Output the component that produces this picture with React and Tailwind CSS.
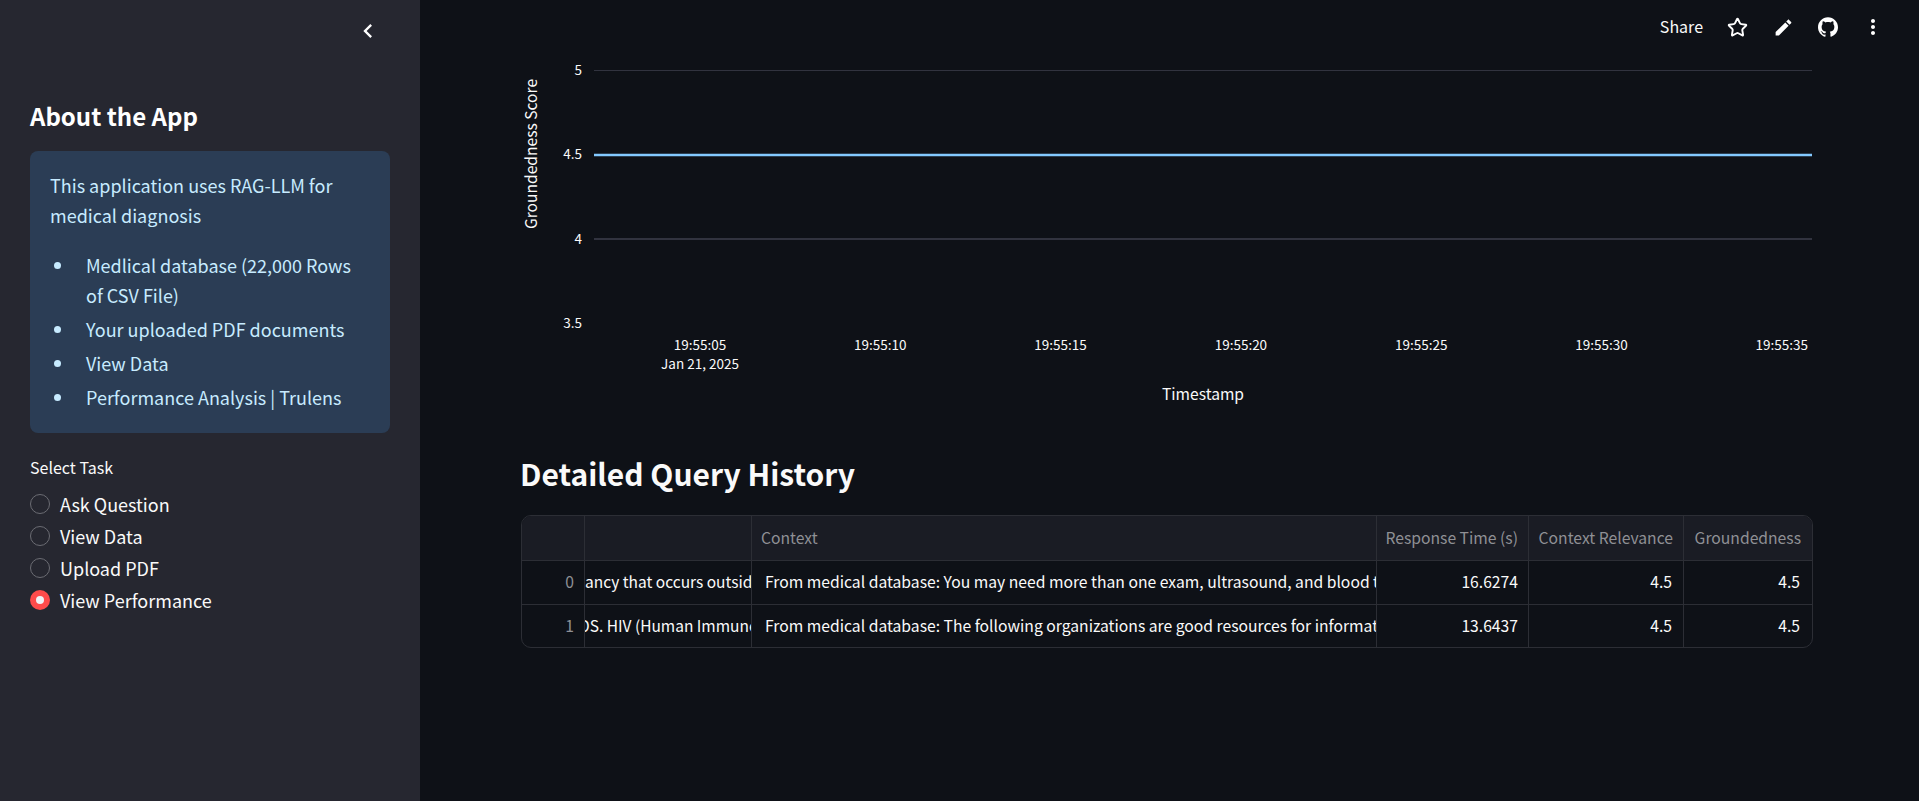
import React from 'react';
import { SiGithub } from 'react-icons/si';
import { Star } from 'lucide-react';

const font = "font-['Noto_Sans_CJK_SC','Noto_Sans',sans-serif]";

const tasks = ['Ask Question', 'View Data', 'Upload PDF', 'View Performance'];
const times = ['19:55:05', '19:55:10', '19:55:15', '19:55:20', '19:55:25', '19:55:30', '19:55:35'];
const bullets = ['Medlical database (22,000 Rows of CSV File)', 'Your uploaded PDF documents', 'View Data', 'Performance Analysis | Trulens'];

const Sidebar = () => (
  <aside className="w-[420px] shrink-0 h-[801px] bg-[#262730] px-[30px] pt-[17px]">
    {/* Collapse button */}
    <div className="flex justify-end pr-[8px] h-[28px]">
      <svg viewBox="0 0 24 24" className="w-[28px] h-[28px] fill-white">
        <path d="M15.41 7.41L14 6l-6 6 6 6 1.41-1.41L10.83 12z" />
      </svg>
    </div>

    <h2 className="mt-[55px] text-[24px] leading-[32px] font-semibold text-white">About the App</h2>

    {/* Info box */}
    <div className="mt-[19px] h-[282px] rounded-[8px] bg-[#2b3d55] pl-[20px] pr-[30px] pt-[19px] text-[#c7ebff] text-[18px] leading-[30px]">
      <p>This application uses RAG-LLM for medical diagnosis</p>
      <ul className="mt-[20px] flex flex-col gap-[4px]">
        {bullets.map((b) => (
          <li key={b} className="flex">
            <span className="mt-[12px] ml-[4px] mr-[25px] w-[7px] h-[7px] shrink-0 rounded-full bg-[#c7ebff]" />
            <span>{b}</span>
          </li>
        ))}
      </ul>
    </div>

    {/* Task radio */}
    <p className="mt-[22px] text-[16px] leading-[24px] text-[#fafafa]">Select Task</p>
    <div className="mt-[15px] flex flex-col gap-[12px]">
      {tasks.map((task, i) => (
        <label key={task} className="flex items-center gap-[10px] h-[20px] text-[18px] leading-[20px] text-[#fafafa]">
          {i === 3 ? (
            <span className="w-[20px] h-[20px] rounded-full bg-[#ff4b4b] flex items-center justify-center">
              <span className="w-[8px] h-[8px] rounded-full bg-[#f0f2f6]" />
            </span>
          ) : (
            <span className="w-[20px] h-[20px] rounded-full border border-[#6b6c73]" />
          )}
          {task}
        </label>
      ))}
    </div>
  </aside>
);

const TopBar = () => (
  <div className="absolute top-[14px] right-[34px] flex items-center text-white">
    <span className="text-[16px] leading-[24px] text-[#fafafa] mr-[24px] mb-[2px]">Share</span>
    <Star size={21} strokeWidth={2.2} className="mr-[25px]" />
    <svg viewBox="0 0 24 24" className="w-[21px] h-[21px] fill-white mr-[24px]">
      <path d="M3 17.25V21h3.75L17.81 9.94l-3.75-3.75L3 17.25zM20.71 7.04c.39-.39.39-1.02 0-1.41l-2.34-2.34c-.39-.39-1.02-.39-1.41 0l-1.83 1.83 3.75 3.75 1.83-1.83z" />
    </svg>
    <SiGithub className="w-[20px] h-[20px] mr-[23px]" />
    <svg viewBox="0 0 24 24" className="w-[24px] h-[24px] fill-white">
      <path d="M12 8c1.1 0 2-.9 2-2s-.9-2-2-2-2 .9-2 2 .9 2 2 2zm0 2c-1.1 0-2 .9-2 2s.9 2 2 2 2-.9 2-2-.9-2-2-2zm0 6c-1.1 0-2 .9-2 2s.9 2 2 2 2-.9 2-2-.9-2-2-2z" />
    </svg>
  </div>
);

// Chart coordinates are relative to (521, 50) on the page
const Chart = () => (
  <svg width="1292" height="360" className="block fill-[#fafafa] text-[13.5px]">
    <line x1="73" x2="1291" y1="20.5" y2="20.5" stroke="#31333f" />
    <line x1="73" x2="1291" y1="189" y2="189" stroke="#31333f" strokeWidth="2" />
    <line x1="73" x2="1291" y1="105" y2="105" stroke="#83c9ff" strokeWidth="2.5" />
    {[['5', 25], ['4.5', 109], ['4', 194], ['3.5', 278]].map(([label, y]) => (
      <text key={label} x="61" y={y} textAnchor="end">{label}</text>
    ))}
    <text transform="translate(16 104) rotate(-90)" textAnchor="middle" className="text-[15.6px]">Groundedness Score</text>
    {times.map((t, i) => (
      <text key={t} x={179 + i * 180.3} y="300" textAnchor="middle">{t}</text>
    ))}
    <text x="179" y="319" textAnchor="middle">Jan 21, 2025</text>
    <text x="682" y="350" textAnchor="middle" className="text-[15.6px]">Timestamp</text>
  </svg>
);

const headers = ['', '', 'Context', 'Response Time (s)', 'Context Relevance', 'Groundedness'];
const rows = [
  {
    idx: 0,
    question: 'ancy that occurs outside',
    offset: 'ml-0 text-[15.5px]',
    context: 'From medical database: You may need more than one exam, ultrasound, and blood t',
    time: '16.6274',
  },
  {
    idx: 1,
    question: 'DS. HIV (Human Immune',
    offset: 'ml-[-6px] text-[15.5px]',
    context: 'From medical database: The following organizations are good resources for informat',
    time: '13.6437',
  },
];

const gridCols = 'grid grid-cols-[63px_167px_625px_152px_155px_127px]';
const cell = 'border-r border-[#2c2e35] last:border-r-0 overflow-hidden whitespace-nowrap flex items-center';

const DataTable = () => (
  <div className="mt-[19px] w-[1292px] rounded-[10px] border border-[#2c2e35] overflow-hidden text-[15.7px]">
    <div className={`${gridCols} h-[45px] bg-[#1a1c24] text-[#8f9095] border-b border-[#2c2e35]`}>
      {headers.map((h, i) => (
        <div key={i} className={`${cell} ${i > 2 ? 'justify-end pr-[10px]' : 'pl-[9px]'}`}>{h}</div>
      ))}
    </div>
    {rows.map((row, r) => (
      <div key={row.idx} className={`${gridCols} ${r === 0 ? 'h-[44px] border-b border-[#2c2e35]' : 'h-[42px]'} text-[#fafafa]`}>
        <div className={`${cell} justify-end pr-[10px] text-[#8f9095] ${r === 0 ? 'pb-[2px]' : ''}`}>{row.idx}</div>
        <div className={`${cell} ${r === 0 ? 'pb-[2px]' : ''}`}><span className={row.offset}>{row.question}</span></div>
        <div className={`${cell} pl-[13px] ${r === 0 ? 'pb-[2px]' : ''}`}>{row.context}</div>
        <div className={`${cell} justify-end pr-[10px] ${r === 0 ? 'pb-[2px]' : ''}`}>{row.time}</div>
        <div className={`${cell} justify-end pr-[11px] ${r === 0 ? 'pb-[2px]' : ''}`}>4.5</div>
        <div className={`${cell} justify-end pr-[11px] ${r === 0 ? 'pb-[2px]' : ''}`}>4.5</div>
      </div>
    ))}
  </div>
);

export default function App() {
  return (
    <div className={`${font} relative flex w-[1919px] h-[801px] overflow-hidden bg-[#0e1117]`}>
      <Sidebar />
      <main className="flex-1 pl-[100px] pt-[50px]">
        <div className="pl-[1px]"><Chart /></div>
        <h1 className="mt-[40px] text-[30px] leading-[46px] font-semibold text-[#fafafa]">Detailed Query History</h1>
        <div className="pl-[1px]"><DataTable /></div>
      </main>
      <TopBar />
    </div>
  );
}
